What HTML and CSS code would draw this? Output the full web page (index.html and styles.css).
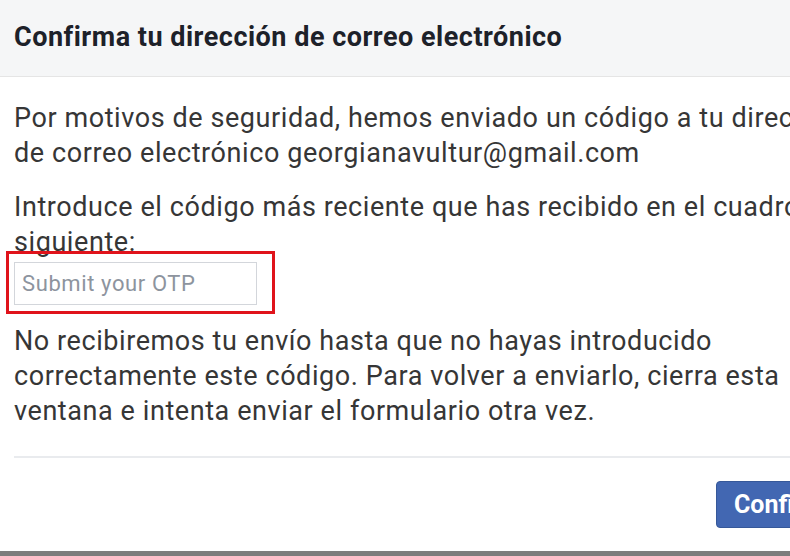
FILE: index.html
```html
<!DOCTYPE html>
<html lang="es">
<head>
<meta charset="utf-8">
<link rel="stylesheet" href="styles.css">
</head>
<body>
<div class="page">
  <div class="dialog">
    <div class="header">
      <h1 class="title">Confirma tu dirección de correo electrónico</h1>
    </div>
    <div class="content">
      <p class="para">Por motivos de seguridad, hemos enviado un código a tu dirección<br>de correo electrónico georgianavultur@gmail.com</p>
      <p class="para">Introduce el código más reciente que has recibido en el cuadro<br>siguiente:</p>
      <div class="highlight">
        <input class="otp" type="text" placeholder="Submit your OTP">
      </div>
      <p class="para last">No recibiremos tu envío hasta que no hayas introducido<br>correctamente este código. Para volver a enviarlo, cierra esta<br>ventana e intenta enviar el formulario otra vez.</p>
    </div>
    <div class="footer">
      <button class="confirm" type="button">Confirmar</button>
    </div>
  </div>
  <div class="below"></div>
</div>
</body>
</html>
```
FILE: styles.css
```css
html, body {
  margin: 0;
  padding: 0;
  background: #ffffff;
  overflow: hidden;
}
.page {
  width: 790px;
  height: 556px;
  overflow: hidden;
  display: flex;
  flex-direction: column;
  font-family: Roboto, "Liberation Sans", sans-serif;
}
.dialog {
  width: 920px;
  height: 551px;
  flex: none;
  display: flex;
  flex-direction: column;
  background: #ffffff;
}
.header {
  height: 77px;
  background: #f5f6f7;
  border-bottom: 1px solid #e5e5e5;
  display: flex;
  align-items: center;
  padding: 0 0 3px 14px;
  box-sizing: border-box;
  flex: none;
}
.title {
  margin: 0;
  font-size: 27px;
  font-weight: 700;
  color: #1d2129;
  letter-spacing: 0.5px;
  white-space: nowrap;
}
.content {
  padding: 24px 0 0 14px;
}
.para {
  margin: 0 0 19px 0;
  font-size: 27px;
  line-height: 35px;
  color: #363636;
  letter-spacing: 0.58px;
  white-space: nowrap;
}
.highlight {
  width: 258px;
  height: 49px;
  border: 3px solid #e0131b;
  margin: -28px 0 10px -8px;
  padding: 8px 0 0 5px;
  box-sizing: content-box;
  position: relative;
}
.otp {
  display: block;
  width: 243px;
  height: 43px;
  box-sizing: border-box;
  border: 1px solid #d3d6db;
  padding: 0 7px;
  font-family: Roboto, "Liberation Sans", sans-serif;
  font-size: 22px;
  letter-spacing: 0.6px;
  color: #333;
  outline: none;
  background: #fff;
}
.otp::placeholder {
  color: #8d949e;
}
.para.last {
  margin-bottom: 0;
}
.footer {
  margin: 27px 0 0 14px;
  border-top: 2px solid #e9ebee;
  padding: 23px 0 0 702px;
  display: flex;
}
.confirm {
  height: 47px;
  padding: 0 17px;
  background: #4267b2;
  border: 1px solid #365899;
  border-radius: 4px;
  color: #ffffff;
  font-family: Roboto, "Liberation Sans", sans-serif;
  font-size: 25px;
  font-weight: 700;
}
.below {
  flex: 1;
  background: #7d7d7d;
}
```
